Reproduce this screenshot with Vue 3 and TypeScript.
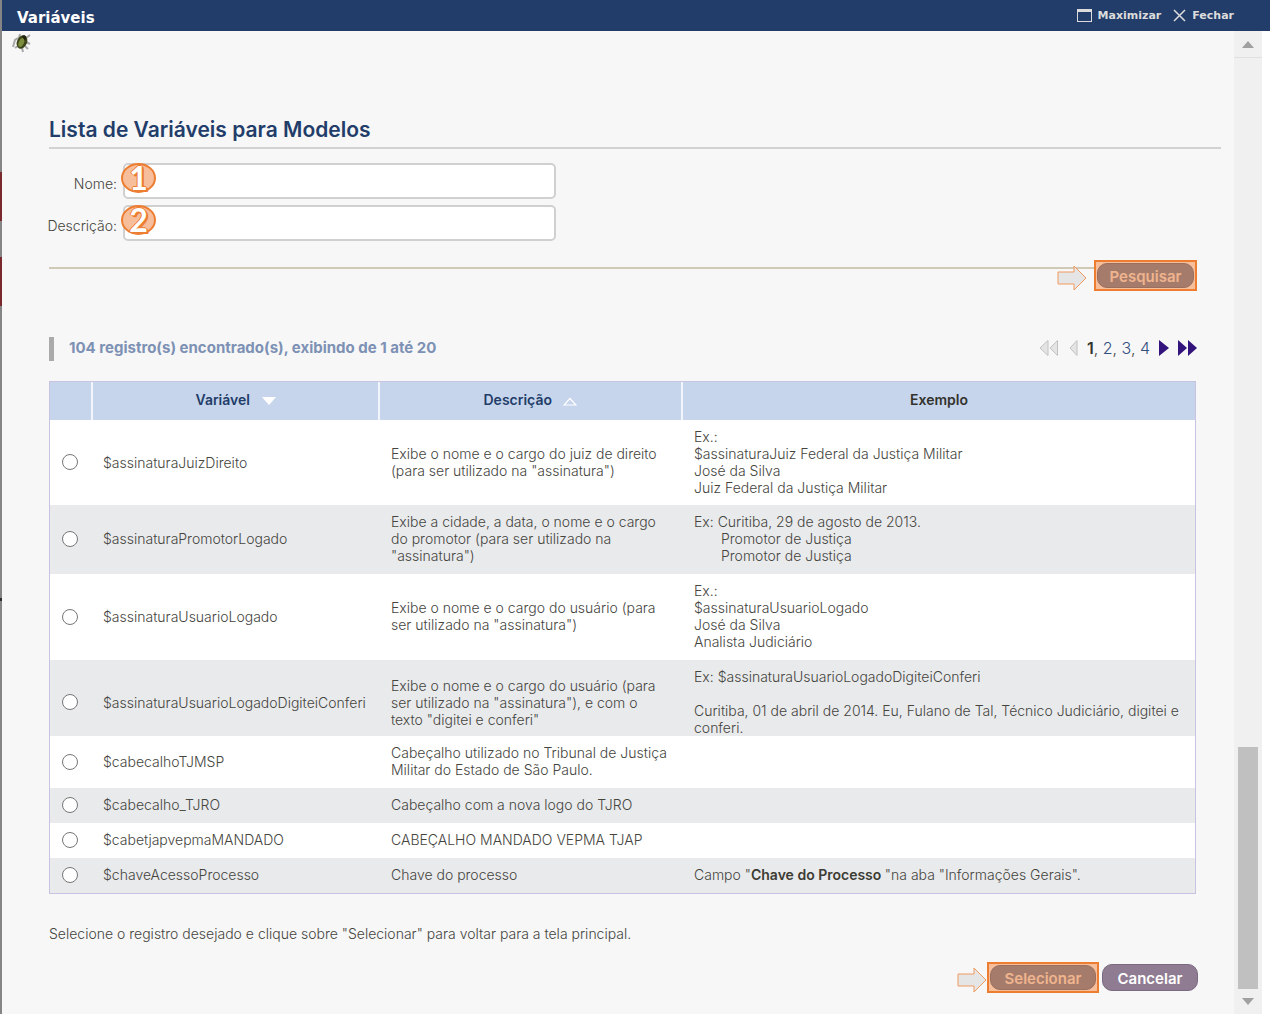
<script setup lang="ts">
import { ref } from 'vue'

interface Row {
  name: string
  description: string
  example: string
  strong?: string
  tail?: string
  tight?: boolean
}

const nome = ref('')
const descricao = ref('')
const selected = ref('')
const otherPages = [2, 3, 4]

const rows: Row[] = [
  {
    name: '$assinaturaJuizDireito',
    description: 'Exibe o nome e o cargo do juiz de direito\n(para ser utilizado na "assinatura")',
    example: 'Ex.:\n$assinaturaJuiz Federal da Justiça Militar\nJosé da Silva\nJuiz Federal da Justiça Militar',
  },
  {
    name: '$assinaturaPromotorLogado',
    description: 'Exibe a cidade, a data, o nome e o cargo\ndo promotor (para ser utilizado na\n"assinatura")',
    example: 'Ex: Curitiba, 29 de agosto de 2013.\n\tPromotor de Justiça\n\tPromotor de Justiça',
  },
  {
    name: '$assinaturaUsuarioLogado',
    description: 'Exibe o nome e o cargo do usuário (para\nser utilizado na "assinatura")',
    example: 'Ex.:\n$assinaturaUsuarioLogado\nJosé da Silva\nAnalista Judiciário',
  },
  {
    name: '$assinaturaUsuarioLogadoDigiteiConferi',
    description: 'Exibe o nome e o cargo do usuário (para\nser utilizado na "assinatura"), e com o\ntexto "digitei e conferi"',
    example: 'Ex: $assinaturaUsuarioLogadoDigiteiConferi\n\nCuritiba, 01 de abril de 2014. Eu, Fulano de Tal, Técnico Judiciário, digitei e\nconferi.',
    tight: true,
  },
  {
    name: '$cabecalhoTJMSP',
    description: 'Cabeçalho utilizado no Tribunal de Justiça\nMilitar do Estado de São Paulo.',
    example: '',
  },
  { name: '$cabecalho_TJRO', description: 'Cabeçalho com a nova logo do TJRO', example: '' },
  { name: '$cabetjapvepmaMANDADO', description: 'CABEÇALHO MANDADO VEPMA TJAP', example: '' },
  {
    name: '$chaveAcessoProcesso',
    description: 'Chave do processo',
    example: 'Campo "',
    strong: 'Chave do Processo ',
    tail: '"na aba "Informações Gerais".',
  },
]
</script>

<template>
  <div class="window">
    <header class="titlebar">
      <h1>Variáveis</h1>
      <div class="window-actions">
        <button type="button">
          <svg width="15" height="13" viewBox="0 0 15 13" aria-hidden="true">
            <rect x="0.5" y="0.5" width="14" height="12" fill="none" stroke="#dcdcdc" />
            <rect x="0" y="0" width="15" height="3" fill="#dcdcdc" />
          </svg>
          Maximizar
        </button>
        <button type="button">
          <svg width="13" height="13" viewBox="0 0 13 13" aria-hidden="true">
            <path d="M1 1 12 12M12 1 1 12" fill="none" stroke="#dcdcdc" stroke-width="1.5" />
          </svg>
          Fechar
        </button>
      </div>
    </header>

    <div class="body">
      <main>
        <svg class="bug" width="20" height="20" viewBox="0 0 20 20" aria-hidden="true">
          <path d="M6 5 3 7 1 14M7 5 8 1M14 5l4-3M14 9l4 2M13 13l3 3M6 13l-3 2M10 15l1 4" fill="none" stroke="#a8a8a8" stroke-width="2" />
          <ellipse cx="10" cy="9" rx="5" ry="7" transform="rotate(24 10 9)" fill="#3c4419" />
          <ellipse cx="9.4" cy="9.5" rx="2.6" ry="4.6" transform="rotate(24 9.4 9.5)" fill="#7c8d3d" />
          <path d="M10 3q4-2 4 2l-1 3z" fill="#1e210f" />
        </svg>

        <h2>Lista de Variáveis para Modelos</h2>

        <form class="search" @submit.prevent>
          <div class="field">
            <label for="nome">Nome:</label>
            <div class="control">
              <input id="nome" v-model="nome" type="text" />
              <span class="badge">1</span>
            </div>
          </div>
          <div class="field">
            <label for="descricao">Descrição:</label>
            <div class="control">
              <input id="descricao" v-model="descricao" type="text" />
              <span class="badge">2</span>
            </div>
          </div>
          <div class="search-foot">
            <svg class="arrow" width="30" height="26" viewBox="0 0 30 26" aria-hidden="true">
              <path d="M1 7H17V1L29 13 17 25V19H1z" fill="#e5e5e5" stroke="#f19a5f" />
            </svg>
            <span class="highlight"><button type="submit" class="action search-button">Pesquisar</button></span>
          </div>
        </form>

        <div class="summary">
          <p class="count">104 registro(s) encontrado(s), exibindo de 1 até 20</p>
          <nav class="pages" aria-label="Paginação">
            <svg width="20" height="18" viewBox="0 0 20 18" aria-hidden="true">
              <path d="M9 1.5V16.5L1 9zM18.500 1.500V16.500L11 9z" fill="#e4e4e4" stroke="#c2c2c2" />
            </svg>
            <svg class="previous" width="9" height="18" viewBox="0 0 9 18" aria-hidden="true">
              <path d="M8 1.500V16.500L1 9z" fill="#e4e4e4" stroke="#c2c2c2" />
            </svg>
            <span class="numbers">
              <b>1</b><template v-for="page in otherPages" :key="page">, <a href="#">{{ page }}</a></template>
            </span>
            <a class="step" href="#" aria-label="Próxima">
              <svg width="10" height="18" viewBox="0 0 10 18"><path d="M0 1V17L10 9z" fill="#32147c" /></svg>
            </a>
            <a class="step" href="#" aria-label="Última">
              <svg width="19" height="18" viewBox="0 0 19 18"><path d="M0 1V17L9 9zM10 1V17L19 9z" fill="#32147c" /></svg>
            </a>
          </nav>
        </div>

        <table>
          <colgroup>
            <col class="col-pick" />
            <col class="col-name" />
            <col class="col-description" />
            <col />
          </colgroup>
          <thead>
            <tr>
              <th></th>
              <th>
                Variável
                <svg width="14" height="9" viewBox="0 0 14 9" aria-hidden="true"><path d="M0 0H14L7 8z" fill="#fff" /></svg>
              </th>
              <th>
                Descrição
                <svg width="14" height="9" viewBox="0 0 14 9" aria-hidden="true"><path d="M1 8H13L7 1.500z" fill="none" stroke="#fff" stroke-width="1.200" /></svg>
              </th>
              <th class="plain">Exemplo</th>
            </tr>
          </thead>
          <tbody>
            <tr v-for="(row, index) in rows" :key="row.name" :class="{ tight: row.tight }">
              <td class="pick"><input :id="`row-${index}`" v-model="selected" type="radio" name="variavel" :value="row.name" /></td>
              <td><label :for="`row-${index}`">{{ row.name }}</label></td>
              <td class="lines">{{ row.description }}</td>
              <td class="lines">{{ row.example }}<b v-if="row.strong">{{ row.strong }}</b>{{ row.tail }}</td>
            </tr>
          </tbody>
        </table>

        <p class="hint">Selecione o registro desejado e clique sobre "Selecionar" para voltar para a tela principal.</p>

        <div class="actions">
          <svg class="arrow" width="30" height="26" viewBox="0 0 30 26" aria-hidden="true">
            <path d="M1 7H17V1L29 13 17 25V19H1z" fill="#e5e5e5" stroke="#f19a5f" />
          </svg>
          <span class="highlight"><button type="button" class="action select-button">Selecionar</button></span>
          <button type="button" class="action cancel">Cancelar</button>
        </div>
      </main>

      <div class="scrollbar" aria-hidden="true">
        <div class="scroll-end up"><svg width="12" height="7" viewBox="0 0 12 7"><path d="M0 7 6 0 12 7z" fill="#a0a0a0" /></svg></div>
        <div class="track"><div class="thumb"></div></div>
        <div class="scroll-end"><svg width="12" height="7" viewBox="0 0 12 7"><path d="M0 0H12L6 7z" fill="#a0a0a0" /></svg></div>
      </div>
    </div>
  </div>
</template>

<style>
body {
  margin: 0;
  background: #fff;
}
</style>

<style scoped>
* {
  box-sizing: border-box;
}

.window {
  display: flex;
  flex-direction: column;
  min-height: 100vh;
  margin-right: 2px;
  padding-left: 2px;
  background:
    linear-gradient(#7a2a2e, #7a2a2e) 0 172px / 2px 49px no-repeat,
    linear-gradient(#7a2a2e, #7a2a2e) 0 257px / 2px 49px no-repeat,
    linear-gradient(#2e2e2e, #2e2e2e) 0 598px / 2px 3px no-repeat,
    linear-gradient(#858585, #858585) 0 0 / 2px 100% no-repeat;
  color: #45453e;
  font: 300 14px/17px Inter, "Liberation Sans", sans-serif;
}

h1,
h2,
p {
  margin: 0;
}

.titlebar {
  display: flex;
  align-items: center;
  justify-content: space-between;
  height: 31px;
  padding: 0 36px 0 15px;
  background: #223d69;
  color: #fff;
  font-family: "DejaVu Sans", sans-serif;
}

.titlebar h1 {
  padding-top: 4px;
  font-size: 15px;
  line-height: 20px;
}

.window-actions {
  display: flex;
  gap: 12px;
}

.window-actions button {
  display: flex;
  align-items: center;
  gap: 6px;
  padding: 0;
  border: 0;
  background: none;
  color: #dcdcdc;
  font: bold 11px/16px "DejaVu Sans", sans-serif;
}

.body {
  display: flex;
  flex: 1;
  margin-right: 8px;
  background: #f7f7f7;
}

main {
  flex: 1;
  min-width: 0;
  padding: 2px 13px 20px 47px;
}

.bug {
  display: block;
  margin-left: -37px;
}

h2 {
  margin-top: 64px;
  padding-bottom: 4px;
  border-bottom: 2px solid #d2d2d2;
  color: #223d69;
  font-size: 21px;
  font-weight: 600;
  line-height: 26px;
}

.search {
  display: flex;
  flex-direction: column;
  gap: 6px;
  margin-top: 14px;
  padding-right: 24px;
}

.field {
  display: flex;
  align-items: center;
  gap: 6px;
}

.field label {
  display: flex;
  justify-content: flex-end;
  width: 68px;
  padding-top: 5px;
  white-space: nowrap;
}

.control {
  position: relative;
  width: 433px;
}

.control input {
  display: block;
  width: 100%;
  height: 36px;
  padding: 0 12px 0 36px;
  border: 2px solid #d0d0d0;
  border-radius: 5px;
  background: #fff;
  font: inherit;
}

.badge {
  position: absolute;
  top: 0;
  left: -2px;
  width: 35px;
  height: 30px;
  border: 2px solid #ed7d31;
  border-radius: 50%;
  background: #f6be9b;
  color: #fff;
  font: bold 32px/26px Lato, sans-serif;
  text-align: center;
  text-shadow: 1px 0 #ed7d31, -1px 0 #ed7d31, 0 -1px #ed7d31, 1px 1px #ed7d31, 2px 2px #ed7d31, 2px 1px #ed7d31;
}

.search-foot {
  display: flex;
  align-items: center;
  margin-top: 13px;
}

.search-foot::before {
  flex: 1;
  align-self: flex-start;
  height: 2px;
  margin-top: 7px;
  margin-right: -37px;
  background: #d0c9b6;
  content: "";
}

.arrow {
  flex: none;
  margin-top: 4px;
}

.search-foot .arrow {
  margin-right: 7px;
}

.highlight {
  display: flex;
  padding: 1px;
  border: 2px solid #ed7d31;
  background: #f6be9b;
}

.action {
  height: 27px;
  padding: 2px 0 0;
  border: 1px solid #9a6f60;
  border-radius: 10px;
  background: #a57c6c;
  color: #f0b48e;
  font: 600 15px/20px Inter, "Liberation Sans", sans-serif;
}

.highlight .action {
  height: 25px;
}

.search-button {
  width: 97px;
}

.select-button {
  width: 106px;
}

.action.cancel {
  width: 96px;
  border-color: #7a6a80;
  background: #8f7c92;
  color: #fff;
}

.summary {
  display: flex;
  align-items: center;
  justify-content: space-between;
  margin-top: 46px;
  padding-right: 24px;
}

.count {
  padding: 0 0 2px 15px;
  border-left: 5px solid #aaa;
  color: #7d91b4;
  font-size: 15px;
  font-weight: 700;
  line-height: 22px;
}

.pages {
  display: flex;
  align-items: center;
  padding-bottom: 2px;
  font-size: 16px;
  line-height: 20px;
}

.previous {
  margin: 0 9px 0 10px;
}

.pages b {
  color: #33332c;
  font-weight: 600;
}

.pages a {
  color: #34507f;
  text-decoration: none;
}

.step {
  display: flex;
  margin-left: 9px;
}

table {
  width: calc(100% - 25px);
  margin-top: 20px;
  border: 1px solid #c9c3e2;
  border-spacing: 0;
  table-layout: fixed;
}

.col-pick {
  width: 41px;
}

.col-name {
  width: 287px;
}

.col-description {
  width: 303px;
}

th {
  height: 38px;
  padding: 0 0 3px;
  border-left: 2px solid #f2f5fb;
  background: #c7d5ec;
  color: #223d69;
  font-weight: 600;
}

th:first-child {
  border-left: 0;
}

th svg {
  margin-left: 8px;
  vertical-align: -1px;
}

th.plain {
  color: #33332c;
}

tbody tr {
  background: #fff;
}

tbody tr:nth-child(even) {
  background: #e9eaec;
}

td {
  padding: 8px 4px 10px 12px;
}

tbody tr:first-child td {
  padding-bottom: 9px;
}

.tight td {
  padding-bottom: 0;
}

td.lines {
  padding-left: 13px;
  white-space: pre-wrap;
  tab-size: 27px;
}

td b {
  color: #3c3c34;
  font-weight: 600;
}

td.pick,
tbody tr:first-child td.pick {
  padding: 0 12px 1px;
}

.tight td.pick {
  padding-top: 8px;
}

.pick input {
  display: block;
  width: 16px;
  height: 16px;
  margin: 0;
  border: 1px solid #767676;
  border-radius: 50%;
  appearance: none;
  background: #fff;
}

.pick input:checked {
  background: radial-gradient(#223d69 45%, #fff 50%);
}

.hint {
  margin-top: 31px;
}

.actions {
  display: flex;
  align-items: center;
  justify-content: flex-end;
  margin-top: 20px;
  padding-right: 23px;
}

.actions .highlight {
  margin-right: 3px;
}

.scrollbar {
  display: flex;
  flex-direction: column;
  width: 28px;
  background: #f0f0f0;
}

.scroll-end {
  display: flex;
  align-items: center;
  justify-content: center;
  height: 25px;
}

.scroll-end.up {
  height: 27px;
  border-bottom: 1px solid #e0e0e0;
}

.track {
  display: flex;
  flex: 1;
  flex-direction: column;
  justify-content: flex-end;
  padding: 0 4px;
}

.thumb {
  height: 242px;
  background: #c0c0c0;
}
</style>
